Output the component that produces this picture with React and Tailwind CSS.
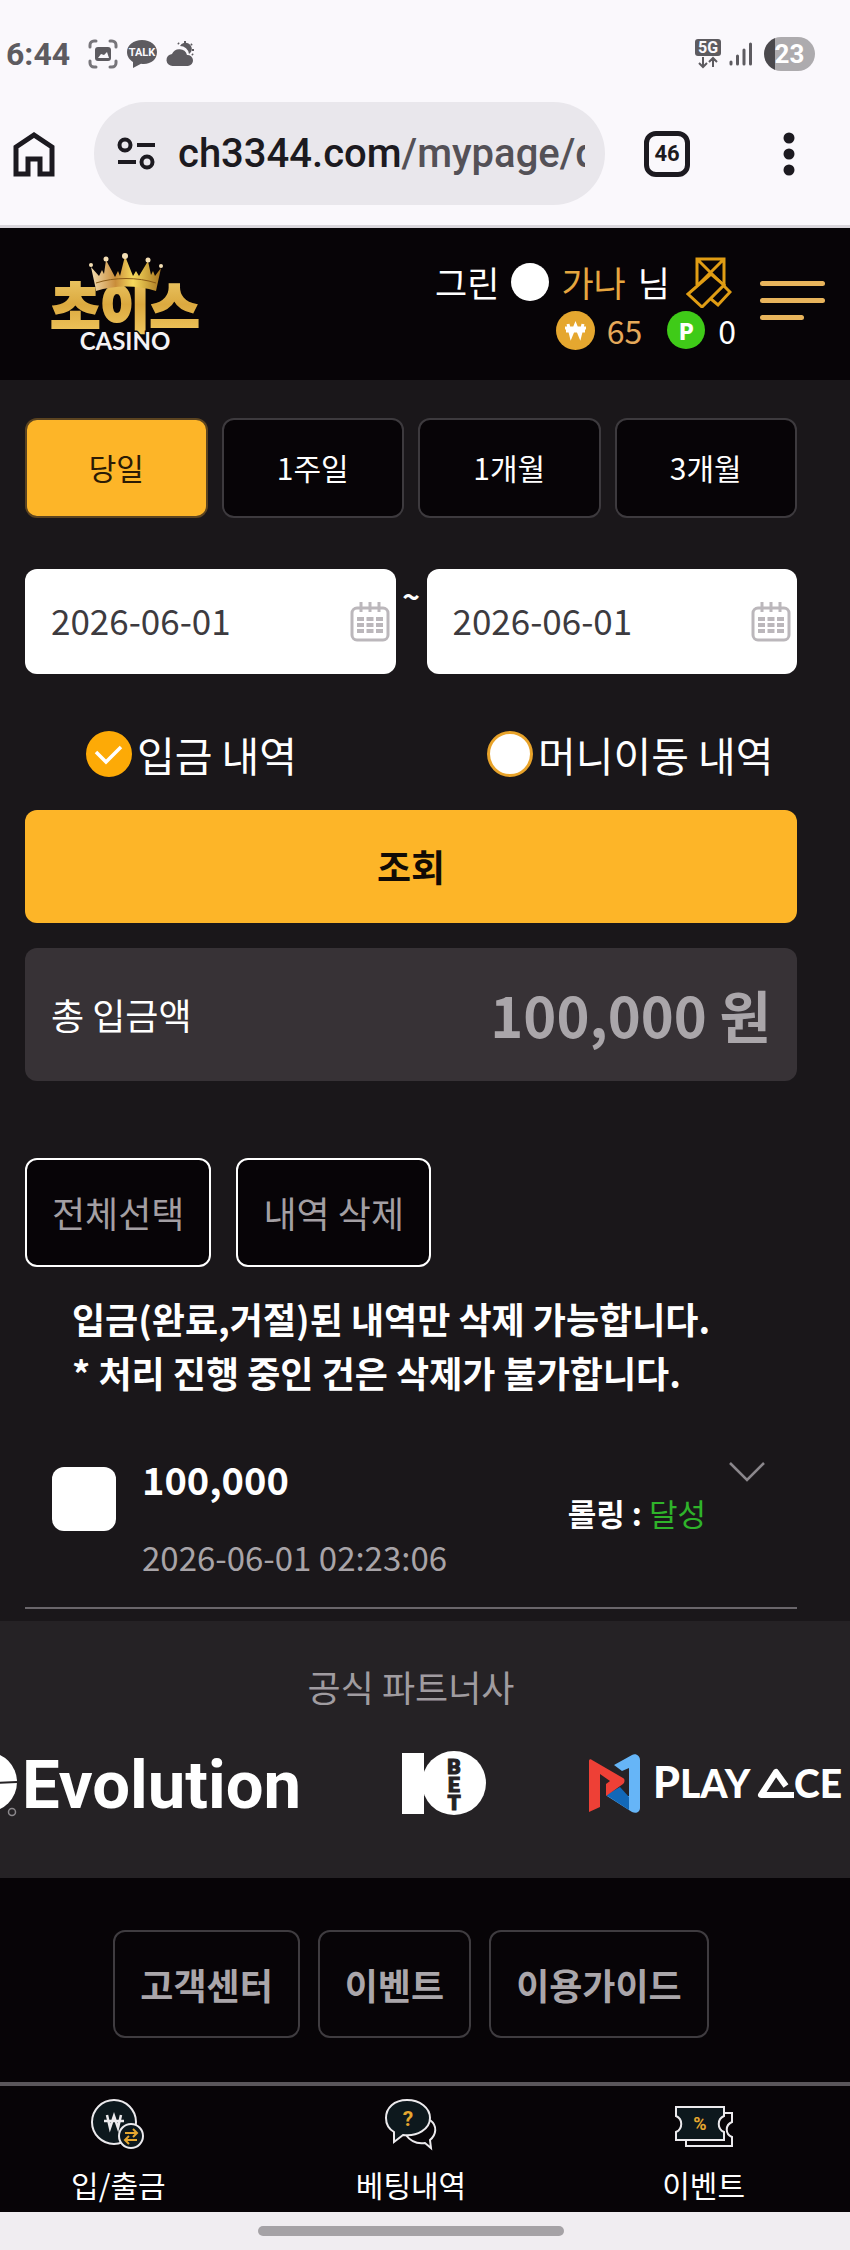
import React, { useState } from 'react';

const PERIODS = ['당일', '1주일', '1개월', '3개월'];

const HISTORY_TYPES = [
  { id: 'deposit', label: '입금 내역' },
  { id: 'transfer', label: '머니이동 내역' },
];

const FOOTER_LINKS = ['고객센터', '이벤트', '이용가이드'];

function StatusBar() {
  return (
    <div className="flex items-center justify-between pl-1.5 pr-[35px] pt-8 h-[76px] text-[#5d5b60]">
      <div className="flex items-center gap-2">
        <span className="text-[32px] leading-[44px] font-bold mr-2.5">6:44</span>
        <svg width="30" height="30" viewBox="0 0 30 30" fill="none" stroke="#77757a" strokeWidth="3" strokeLinecap="round">
          <path d="M2 8V6a4 4 0 0 1 4-4h2M22 2h2a4 4 0 0 1 4 4v2M28 22v2a4 4 0 0 1-4 4h-2M8 28H6a4 4 0 0 1-4-4v-2" />
          <rect x="7" y="8" width="16" height="14" rx="3" fill="#5d5b60" stroke="none" />
          <path d="M10 19l3-4 3 1 3-3 2 6z" fill="#faf8fc" stroke="none" />
        </svg>
        <svg width="32" height="30" viewBox="0 0 32 30">
          <path d="M16 1C7.500 1 1 6 1 13c0 5 3 8 6 10l0 6 8-4.300c9 1.300 16-3.700 16-11.700C31 6 24.500 1 16 1z" fill="#5d5b60" />
          <text x="16" y="17" textAnchor="middle" fontSize="11" fontWeight="700" fill="#faf8fc" fontFamily="Roboto, sans-serif">TALK</text>
        </svg>
        <svg width="30" height="26" viewBox="0 0 30 26" fill="#5d5b60">
          <path d="M7 25a6 6 0 0 1-1-12 8 8 0 0 1 15 1 5.500 5.500 0 0 1 1 11z" />
          <path d="M14 5a6 6 0 0 1 11 6l-2 2a9 9 0 0 0-9-8z" />
          <path d="M19 0v2M12 2l1 1M26 3l-1 1M28 9h-2M27 14l-1-1" stroke="#5d5b60" strokeWidth="2" />
        </svg>
      </div>
      <div className="flex items-center gap-[7px]">
        <svg width="28" height="32" viewBox="0 0 28 32">
          <rect x="1" y="1" width="26" height="17" rx="3" fill="#5d5b60" />
          <text x="14" y="15" textAnchor="middle" fontSize="16" fontWeight="700" fill="#faf8fc" fontFamily="Roboto, sans-serif">5G</text>
          <path d="M9 19v9M5 25l4 4 4-4M19 29v-9M15 24l4-4 4 4" fill="none" stroke="#5d5b60" strokeWidth="2" />
        </svg>
        <svg width="24" height="24" viewBox="0 0 24 24" stroke="#5d5b60" strokeWidth="3" strokeLinecap="round">
          <path d="M2 20v2M8.500 14v8M15 8v14M21.500 2v20" />
        </svg>
        <span className="ml-1 flex items-center justify-center w-[51px] h-[34px] rounded-full bg-linear-to-r from-[#4b494d] from-22% to-[#adabae] to-22% text-[26px] font-bold text-white">23</span>
      </div>
    </div>
  );
}

function AddressBar() {
  return (
    <div className="flex items-center h-[152px] pt-1.5 pl-3 pr-[53px] border-b-3 border-[#d9d6dc] text-[#1c1a20]">
      <button type="button" aria-label="홈">
        <svg width="44" height="48" viewBox="0 0 44 48" fill="none" stroke="#1c1a20" strokeWidth="5">
          <path d="M4 44V17L22 5l18 12v27H28V29H16v15z" />
        </svg>
      </button>
      <div className="ml-[38px] flex items-center w-[511px] h-[103px] rounded-full bg-[#e9e7ec] pl-[23px] pr-5">
        <svg className="shrink-0" width="40" height="34" viewBox="0 0 40 34" fill="none" stroke="#1c1a20" strokeWidth="4">
          <circle cx="8" cy="8" r="5.500" />
          <path d="M20 8h18M1 25h18" />
          <circle cx="30" cy="25" r="5.500" />
        </svg>
        <p className="ml-[21px] flex-1 overflow-hidden whitespace-nowrap text-[40px] leading-[56px] font-medium">
          ch3344.com<span className="text-[#545157]">/mypage/d</span>
        </p>
      </div>
      <button type="button" aria-label="탭" className="ml-[39px] flex items-center justify-center w-[46px] h-[46px] border-[5px] border-[#1c1a20] rounded-xl text-[22px] font-bold">
        46
      </button>
      <button type="button" aria-label="메뉴" className="ml-auto">
        <svg width="16" height="46" viewBox="0 0 16 46" fill="#1c1a20">
          <circle cx="8" cy="7" r="5.500" />
          <circle cx="8" cy="23" r="5.500" />
          <circle cx="8" cy="39" r="5.500" />
        </svg>
      </button>
    </div>
  );
}

function Logo() {
  return (
    <svg width="156" height="104" viewBox="0 0 156 104" role="img" aria-label="초이스 CASINO">
      <defs>
        <linearGradient id="gold" x1="0" y1="0" x2="0" y2="1">
          <stop offset="0" stopColor="#f2d375" />
          <stop offset="0.5" stopColor="#dba93f" />
          <stop offset="1" stopColor="#f6cf66" />
        </linearGradient>
        <linearGradient id="crown" x1="0" y1="0" x2="1" y2="0">
          <stop offset="0" stopColor="#f3dcae" />
          <stop offset="0.35" stopColor="#c98d3a" />
          <stop offset="0.6" stopColor="#f6d95c" />
          <stop offset="1" stopColor="#a87520" />
        </linearGradient>
      </defs>
      <text x="78" y="76" textAnchor="middle" fontSize="54" fontWeight="900" fill="url(#gold)" stroke="url(#gold)" strokeWidth="2" fontFamily="'Noto Sans CJK KR', sans-serif">초이스</text>
      <path d="M49 38L44 15l8 9 3-6 2 4 2-14 9 17 3-6 2 5 5-20 8 20 3-5 3 5 9-15 3 14 2-4 2 5 6-8-5 23c-18-6-42-6-60 0z" fill="url(#crown)" />
      <path d="M49 31c18-6 42-6 60 0" fill="none" stroke="#8a5a16" strokeWidth="1" />
      <g fill="#f4dfb4">
        <circle cx="44" cy="13" r="2" />
        <circle cx="59" cy="7" r="2.500" />
        <circle cx="78" cy="4" r="3" />
        <circle cx="101" cy="8" r="2.500" />
        <circle cx="114" cy="14" r="2" />
      </g>
      <text x="78" y="98" textAnchor="middle" fontSize="24" fontWeight="700" fill="#f4f2f5" stroke="#080508" strokeWidth="3" paintOrder="stroke" fontFamily="Lato, sans-serif">CASINO</text>
    </svg>
  );
}

function SiteHeader() {
  return (
    <header className="flex items-center justify-between bg-[#070407] h-[152px] pl-[47px] pr-[25px]">
      <a href="#home"><Logo /></a>
      <div className="flex items-center gap-6">
        <div className="flex flex-col items-end">
          <div className="flex items-center gap-3 mr-1 text-[35px] leading-[48px] text-white">
            <span>그린</span>
            <span className="w-[38px] h-[38px] rounded-full bg-white" />
            <span className="text-[#e5a63f]">가나</span>
            <span>님</span>
            <a href="#messages" aria-label="쪽지" className="ml-1">
              <svg width="46" height="52" viewBox="0 0 46 52" fill="none" stroke="#e09d14" strokeWidth="3">
                <path d="M11 29V3h27v26M11 3l27 27M38 3L11 30" />
                <path d="M25 18L2 38l14 13 22-22z" fill="#070407" />
                <path d="M25 43l7 6 12-13-7-7" />
              </svg>
            </a>
          </div>
          <div className="flex items-center text-[32px] leading-[44px]">
            <svg width="39" height="39" viewBox="0 0 39 39">
              <circle cx="19.500" cy="19.500" r="19.500" fill="#e5a72f" />
              <path d="M12 13l3 12 4.500-11L24 25l3-12M9 17h21M10 20h19" fill="none" stroke="#fff" strokeWidth="3" />
            </svg>
            <span className="ml-3 text-[#e5a95a]">65</span>
            <span className="ml-[25px] flex items-center justify-center w-[38px] h-[38px] rounded-full bg-[#3fcb18] text-[22px] font-black text-white">P</span>
            <span className="ml-[13px] text-white">0</span>
          </div>
        </div>
        <button type="button" aria-label="전체메뉴" className="mb-2 flex flex-col gap-3">
          <span className="w-[65px] h-[5px] rounded-full bg-[#e8b45c]" />
          <span className="w-[65px] h-[5px] rounded-full bg-[#e8b45c]" />
          <span className="w-[44px] h-[5px] rounded-full bg-[#e8b45c]" />
        </button>
      </div>
    </header>
  );
}

function DateField({ label, value, onChange }) {
  return (
    <label className="flex items-center flex-1 min-w-0 h-[105px] rounded-xl bg-white pl-[26px] pr-1.5">
      <input
        type="text"
        aria-label={label}
        value={value}
        onChange={(e) => onChange(e.target.value)}
        className="flex-1 min-w-0 pb-1 text-[35px] leading-[52px] text-[#3d3b3f] outline-none"
      />
      <svg className="shrink-0" width="40" height="40" viewBox="0 0 40 40" fill="none" stroke="#bbb7bb" strokeWidth="3">
        <rect x="2" y="6" width="36" height="32" rx="5" />
        <path d="M11 0v10M20 0v10M29 0v10" />
        <path d="M7 17h26M7 23h26M7 29h26" strokeWidth="4" strokeDasharray="7 2.500" />
      </svg>
    </label>
  );
}

function HistoryRow() {
  return (
    <div className="mt-8 flex items-start h-[178px] pt-5 pl-[27px] pr-[31px] border-b-2 border-[#6a666b]">
      <input type="checkbox" aria-label="내역 선택" className="appearance-none shrink-0 w-16 h-16 mt-4 rounded-xl bg-white checked:bg-[#fdb528]" />
      <div className="ml-[26px]">
        <p className="text-[38px] leading-[56px] font-bold text-white">100,000</p>
        <p className="mt-[26px] text-[33px] leading-[48px] text-[#a8a4a8]">2026-06-01 02:23:06</p>
      </div>
      <p className="ml-auto mt-10 text-[31px] leading-[44px] font-bold text-white">
        롤링 : <span className="font-normal text-[#2fb32a]">달성</span>
      </p>
      <button type="button" aria-label="상세 보기" className="ml-[22px] mt-2.5">
        <svg width="38" height="22" viewBox="0 0 38 22" fill="none" stroke="#8b878c" strokeWidth="2.500">
          <path d="M2 2l17 17L36 2" />
        </svg>
      </button>
    </div>
  );
}

function Partners() {
  return (
    <section className="bg-[#252225] pt-[39px] pb-[58px]">
      <h2 className="pr-7 text-center text-[36px] leading-[52px] text-[#a09ca0]">공식 파트너사</h2>
      <div className="mt-7 flex items-center gap-[97px] overflow-hidden">
        <svg className="shrink-0" width="305" height="80" viewBox="0 0 305 80" role="img" aria-label="Evolution">
          <circle cx="-13" cy="42" r="30" fill="#fff" />
          <path d="M-10 43l27-1" stroke="#252225" strokeWidth="2" />
          <circle cx="12" cy="72" r="3.500" fill="none" stroke="#8b888c" strokeWidth="1.500" />
          <text x="22" y="68" fontSize="67" fontWeight="700" fill="#fff" fontFamily="Roboto, sans-serif">Evolution</text>
        </svg>
        <svg className="shrink-0" width="87" height="80" viewBox="0 0 87 80" role="img" aria-label="10BET">
          <path d="M0 13h22v61H0z" fill="#fff" />
          <circle cx="52" cy="43" r="32" fill="#fff" />
          <g fontSize="21" fontWeight="900" fill="#252225" stroke="#252225" strokeWidth="1" textAnchor="middle" fontFamily="Roboto, sans-serif">
            <text x="52" y="34">B</text>
            <text x="52" y="52">E</text>
            <text x="52" y="70">T</text>
          </g>
        </svg>
        <svg className="shrink-0" width="260" height="80" viewBox="0 0 260 80" role="img" aria-label="PLAYACE">
          <path d="M28 25L46 15c4-2 8 1 8 5v48c0 4-4 6-8 4L21 56l22 0V28l-7 3z" fill="#66b5f7" />
          <path d="M20 55l14-8 9 10v13z" fill="#1268b8" />
          <path d="M3 21c0-2 2-2 3-1l31 18c2 1 2 4 0 6L20 56V44l4-3-10-7v33L3 72z" fill="#ee4036" />
          <text x="67" y="58" fontSize="43" fontWeight="900" fill="#fff" fontFamily="Lato, sans-serif">P</text>
          <text x="94" y="58" fontSize="39" fontWeight="900" fill="#fff" fontFamily="Lato, sans-serif">LAY</text>
          <path d="M200 46l-10-14-15 23h33" fill="none" stroke="#fff" strokeWidth="6" strokeLinejoin="round" />
          <text x="208" y="58" fontSize="39" fontWeight="900" fill="#fff" fontFamily="Lato, sans-serif">CE</text>
        </svg>
      </div>
    </section>
  );
}

function WalletIcon() {
  return (
    <svg width="54" height="52" viewBox="0 0 54 52" fill="#0d181d" stroke="#eceaed" strokeWidth="2">
      <circle cx="23" cy="23" r="22" />
      <path d="M16 16l3 13 4-12 4 12 3-13M13 22h20" fill="none" strokeWidth="2.500" />
      <circle cx="40" cy="37" r="12" />
      <path d="M34 34h11M42 30l4 4-4 4M46 41H35M38 37l-4 4 4 4" fill="none" stroke="#e5a72f" />
    </svg>
  );
}

function BetIcon() {
  return (
    <svg width="54" height="52" viewBox="0 0 54 52" fill="none" stroke="#eceaed" strokeWidth="2">
      <path d="M22 36c5 7 12 9 19 8l6 5-1-8c6-5 8-14 0-20" />
      <path d="M23 1C10 1 2 9 2 19c0 6 3 11 8 14v10l9-7c14 2 27-6 27-17C46 9 36 1 23 1z" fill="#0d181d" />
      <text x="24" y="27" textAnchor="middle" fontSize="21" fontWeight="700" fill="#e5a72f" stroke="none" fontFamily="Roboto, sans-serif">?</text>
    </svg>
  );
}

function EventIcon() {
  return (
    <svg width="58" height="52" viewBox="0 0 58 52" fill="none" stroke="#eceaed" strokeWidth="2">
      <path d="M48 14h9v9c-7 3-7 12 0 15v9H11v-7" />
      <path d="M1 8h48v9c-7 3-7 13 0 16v8H1v-8c7-3 7-13 0-16z" fill="#0d181d" />
      <text x="25" y="31" textAnchor="middle" fontSize="18" fontWeight="700" fill="#e5a72f" stroke="none" fontFamily="Roboto, sans-serif">%</text>
    </svg>
  );
}

const NAV_ITEMS = [
  { label: '입/출금', icon: WalletIcon },
  { label: '베팅내역', icon: BetIcon },
  { label: '이벤트', icon: EventIcon },
];

export default function App() {
  const [period, setPeriod] = useState('당일');
  const [type, setType] = useState('deposit');
  const [from, setFrom] = useState('2026-06-01');
  const [to, setTo] = useState('2026-06-01');

  return (
    <div className="min-h-screen bg-[#1a171a] font-['Noto_Sans_CJK_KR',sans-serif]">
      {/* Browser chrome */}
      <div className="bg-[#faf8fc] font-[Roboto,sans-serif]">
        <StatusBar />
        <AddressBar />
      </div>

      <SiteHeader />

      <main className="pl-[25px] pr-[53px] pt-[38px] pb-3">
        {/* Period */}
        <div className="grid grid-cols-4 gap-[14px]">
          {PERIODS.map((p) => (
            <button
              key={p}
              type="button"
              onClick={() => setPeriod(p)}
              className={`h-[100px] pb-0.5 rounded-xl border-2 text-[30px] ${
                p === period ? 'bg-[#fdb528] border-[#5c4420] text-[#2b1b05]' : 'bg-[#070407] border-[#3d3a3e] text-white'
              }`}
            >
              {p}
            </button>
          ))}
        </div>

        {/* Date range */}
        <div className="mt-[51px] flex">
          <DateField label="시작일" value={from} onChange={setFrom} />
          <span className="w-[31px] pt-1 text-center text-[30px] leading-[44px] font-bold text-white">~</span>
          <DateField label="종료일" value={to} onChange={setTo} />
        </div>

        {/* History type */}
        <div className="mt-[50px] grid grid-cols-[401px_1fr] pl-[61px]">
          {HISTORY_TYPES.map((t) => (
            <label key={t.id} className="flex items-center gap-[5px] text-[41px] leading-[60px] text-white whitespace-nowrap">
              <span className="grid">
                <input
                  type="radio"
                  name="type"
                  checked={type === t.id}
                  onChange={() => setType(t.id)}
                  className="appearance-none col-start-1 row-start-1 w-[46px] h-[46px] rounded-full border-3 border-[#e8a32a] bg-white checked:bg-[#fdaa06] checked:border-[#fdaa06]"
                />
                {type === t.id && (
                  <svg className="col-start-1 row-start-1 pointer-events-none" width="46" height="46" viewBox="0 0 46 46" fill="none" stroke="#fff" strokeWidth="3.500">
                    <path d="M10 21l10 10 15-15" />
                  </svg>
                )}
              </span>
              {t.label}
            </label>
          ))}
        </div>

        <button type="button" className="mt-[26px] w-full h-[113px] rounded-xl bg-[#fdb528] text-[37px] font-bold text-[#110b05]">
          조회
        </button>

        <div className="mt-[25px] flex items-center justify-between h-[133px] rounded-xl bg-[#373236] px-[26px] pb-0.5">
          <span className="text-[36px] text-white">총 입금액</span>
          <span className="text-[56px] font-bold text-[#aaa6aa]">100,000 원</span>
        </div>

        {/* Delete actions */}
        <div className="mt-[77px] flex gap-[25px]">
          <button type="button" className="h-[109px] px-[25px] pb-0.5 rounded-xl border-2 border-white bg-[#070407] text-[36px] text-[#a39fa3]">전체선택</button>
          <button type="button" className="h-[109px] px-[25px] pb-0.5 rounded-xl border-2 border-white bg-[#070407] text-[36px] text-[#a39fa3]">내역 삭제</button>
        </div>

        <p className="mt-6 pl-[47px] text-[36px] leading-[54px] font-bold text-white">
          입금(완료,거절)된 내역만 삭제 가능합니다.
          <br />
          * 처리 진행 중인 건은 삭제가 불가합니다.
        </p>

        <HistoryRow />
      </main>

      <Partners />

      <footer className="bg-[#070407] pt-[52px] pb-11 pr-7 flex justify-center gap-[18px]">
        {FOOTER_LINKS.map((label) => (
          <a key={label} href="#footer" className="flex items-center h-[108px] px-[25px] rounded-xl border-2 border-[#3f3c40] text-[36px] font-bold text-[#aaa6aa]">
            {label}
          </a>
        ))}
      </footer>

      <nav className="bg-[#070407] border-t-4 border-[#5a565b] pt-[13px] pb-1.5">
        <div className="-ml-7 grid grid-cols-3">
          {NAV_ITEMS.map(({ label, icon: Icon }) => (
            <a key={label} href="#nav" className="flex flex-col items-center text-[30px] leading-[44px] text-white">
              <Icon />
              <span className="mt-[11px]">{label}</span>
            </a>
          ))}
        </div>
      </nav>

      <div className="bg-[#f0edf1] pt-[14px] pb-[14px] pr-7">
        <div className="mx-auto w-[306px] h-[10px] rounded-full bg-[#a5a2a6]" />
      </div>
    </div>
  );
}
